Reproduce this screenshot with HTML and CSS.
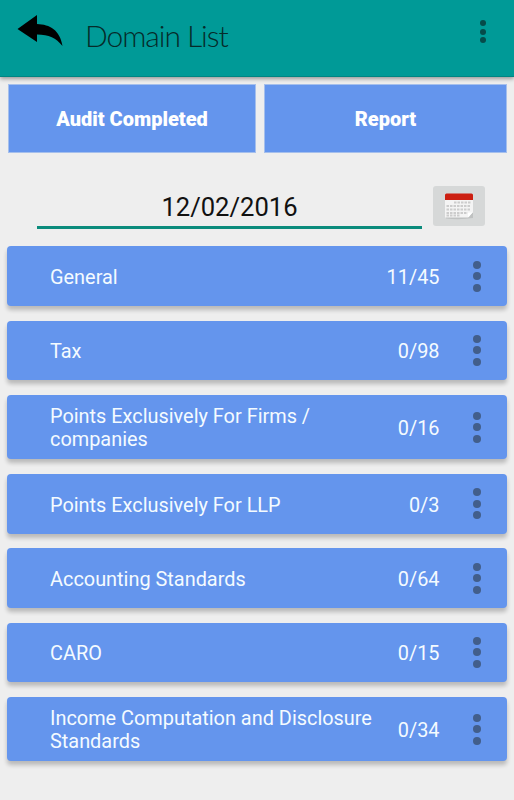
FILE: index.html
```html
<!DOCTYPE html>
<html lang="en">
  <head>
    <meta charset="UTF-8" />
    <meta name="viewport" content="width=device-width, initial-scale=1.0" />
    <title>Domain List</title>
    <link rel="stylesheet" href="styles.css">
  </head>
  <body>
    <header class="toolbar">
      <svg class="back" width="48" height="34" viewBox="0 0 48 34">
        <path d="M0.5 14 L20 0 V9 C33 9.500 43 15 45.500 31 C39 23 32 19.500 20 19.500 V27 Z" />
      </svg>
      <h1 class="title">Domain List</h1>
      <div class="menu small"><span></span><span></span><span></span></div>
    </header>

    <div class="actions">
      <button class="action completed">Audit Completed</button>
      <button class="action report">Report</button>
    </div>

    <div class="date-row">
      <div class="date">12/02/2016</div>
      <button class="calendar">
        <svg width="30" height="28" viewBox="0 0 30 28">
          <path d="M2 24 H25 L29 19 V25 Q16 27 2 25.500 Z" fill="#bfc1c1" />
          <path d="M1 7 H29 V19 L24 24.500 H1 Z" fill="#f4f4f4" />
          <path d="M1 7 V2 Q1 0.500 2.500 0.500 H27.500 Q29 0.500 29 2 V7 Z" fill="#cc1f12" />
          <path d="M10 9.500 H27 M2.500 13 H27 M2.500 16.500 H27 M2.500 20 H24 M2.500 22.500 H16" stroke="#cccccc" stroke-width="2.200" stroke-dasharray="2.500 1" />
          <path d="M29 19 Q26 20 23 19.500 Q25 22 24 24.500 Z" fill="#fff" />
        </svg>
      </button>
    </div>

    <div class="list">
      <div class="card">
        <div class="name">General</div>
        <div class="count">11/45</div>
        <div class="menu"><span></span><span></span><span></span></div>
      </div>
      <div class="card">
        <div class="name">Tax</div>
        <div class="count">0/98</div>
        <div class="menu"><span></span><span></span><span></span></div>
      </div>
      <div class="card tall">
        <div class="name">Points Exclusively For Firms /<br>companies</div>
        <div class="count">0/16</div>
        <div class="menu"><span></span><span></span><span></span></div>
      </div>
      <div class="card">
        <div class="name">Points Exclusively For LLP</div>
        <div class="count">0/3</div>
        <div class="menu"><span></span><span></span><span></span></div>
      </div>
      <div class="card">
        <div class="name">Accounting Standards</div>
        <div class="count">0/64</div>
        <div class="menu"><span></span><span></span><span></span></div>
      </div>
      <div class="card">
        <div class="name">CARO</div>
        <div class="count">0/15</div>
        <div class="menu"><span></span><span></span><span></span></div>
      </div>
      <div class="card tall">
        <div class="name">Income Computation and Disclosure<br>Standards</div>
        <div class="count">0/34</div>
        <div class="menu"><span></span><span></span><span></span></div>
      </div>
    </div>
  </body>
</html>
```
FILE: styles.css
```css
* {
  box-sizing: border-box;
}
body {
  margin: 0;
  height: 800px;
  overflow: hidden;
  background-color: #eeeeee;
  font-family: Roboto, sans-serif;
}
.toolbar {
  display: flex;
  align-items: flex-start;
  height: 77px;
  padding: 15px 28.5px 0 17px;
  background-color: #009a97;
  border-bottom: 1px solid #008582;
  box-shadow: 0 2px 4px rgba(0, 0, 0, 0.35);
}
.title {
  flex: 1;
  margin: 2px 0 0 20px;
  font-family: Lato, sans-serif;
  font-size: 30px;
  font-weight: 300;
  line-height: 36px;
  letter-spacing: -1.05px;
  color: #062b2a;
}
.menu {
  display: flex;
  flex-direction: column;
  gap: 3.5px;
}
.menu span {
  width: 8px;
  height: 8px;
  border-radius: 50%;
  background-color: #425e8b;
}
.menu.small {
  gap: 2.7px;
  margin-top: 5px;
}
.menu.small span {
  width: 6px;
  height: 6px;
  background-color: #064b4a;
}
.actions {
  display: flex;
  gap: 8px;
  padding: 7px 7px 0 8px;
}
.action {
  height: 69px;
  padding: 1px 0 0;
  border: 1px solid #a5bfec;
  background-color: #6495ed;
  color: white;
  font-family: Roboto, sans-serif;
  font-size: 20px;
  font-weight: 900;
}
.completed {
  width: 248px;
}
.report {
  flex: 1;
}
.date-row {
  display: flex;
  gap: 11px;
  height: 93.25px;
  padding: 33px 0 0 37px;
}
.date {
  width: 385px;
  height: 43px;
  border-bottom: 3px solid #0a8b7c;
  font-size: 25.6px;
  line-height: 43px;
  text-align: center;
  color: #111;
}
.calendar {
  display: flex;
  justify-content: center;
  width: 52px;
  height: 40px;
  padding: 7px 0 0;
  border: none;
  border-radius: 3px;
  background-color: #d6d8d8;
}
.list {
  display: flex;
  flex-direction: column;
  gap: 14.75px;
  padding: 0 7px;
}
.card {
  display: flex;
  align-items: center;
  height: 59.5px;
  padding: 0 26px 0 43px;
  border-radius: 4px;
  background-color: #6495ed;
  box-shadow: 0 4px 4px rgba(0, 0, 0, 0.22);
  color: #f4fbff;
  font-size: 19.9px;
  line-height: 23.5px;
}
.tall {
  height: 64.5px;
}
.name {
  flex: 1;
  white-space: nowrap;
  padding-top: 3.5px;
}
.tall .name {
  padding-top: 2.5px;
}
.count {
  width: 70px;
  margin-right: 33.5px;
  padding-top: 3.5px;
  text-align: right;
}
```
